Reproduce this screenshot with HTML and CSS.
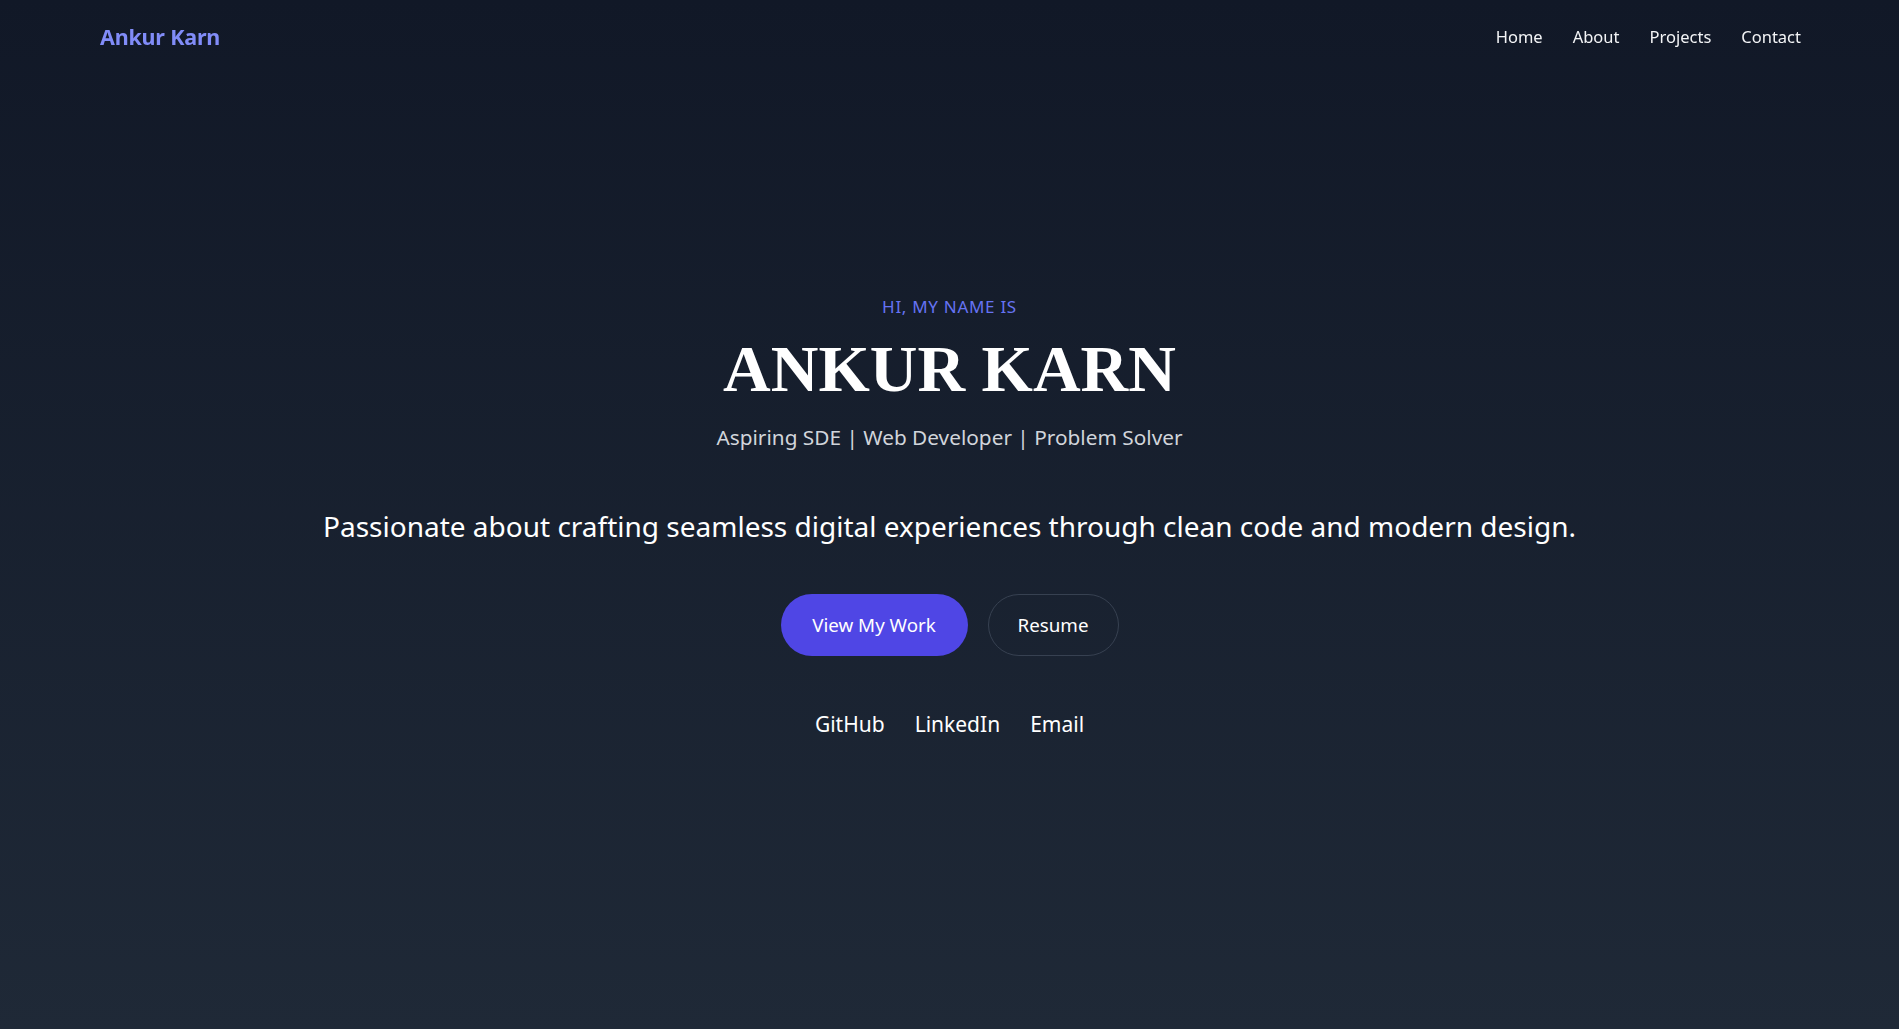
FILE: index.html
```html
<!DOCTYPE html>
<html lang="en">
<head>
<meta charset="utf-8">
<title>Ankur Karn</title>
<link rel="stylesheet" href="styles.css">
</head>
<body>
<header class="site-header">
  <a class="logo" href="#">Ankur Karn</a>
  <nav class="nav">
    <a href="#">Home</a>
    <a href="#">About</a>
    <a href="#">Projects</a>
    <a href="#">Contact</a>
  </nav>
</header>
<main class="hero">
  <p class="intro">HI, MY NAME IS</p>
  <h1 class="name">ANKUR KARN</h1>
  <p class="role">Aspiring SDE | Web Developer | Problem Solver</p>
  <p class="tagline">Passionate about crafting seamless digital experiences through clean code and modern design.</p>
  <div class="actions">
    <a class="btn btn-primary" href="#">View My Work</a>
    <a class="btn btn-outline" href="#">Resume</a>
  </div>
  <div class="socials">
    <a href="#">GitHub</a>
    <a href="#">LinkedIn</a>
    <a href="#">Email</a>
  </div>
</main>
</body>
</html>
```
FILE: styles.css
```css
* { box-sizing: border-box; }
html, body { margin: 0; padding: 0; }
body {
  min-height: 100vh;
  background: linear-gradient(to bottom, #111827, #1f2937);
  color: #ffffff;
  font-family: "Noto Sans", "Open Sans", sans-serif;
}
a { color: inherit; text-decoration: none; }

.site-header {
  position: fixed;
  top: 0; left: 0; right: 0;
  height: 72px;
  padding: 0 98px 0 100px;
  display: flex;
  align-items: center;
  justify-content: space-between;
}
.logo {
  font-weight: 700;
  font-size: 21.5px;
  color: #818cf8;
  letter-spacing: -0.2px;
}
.nav { display: flex; gap: 30px; }
.nav a { font-size: 16.5px; color: #f3f4f6; }

.hero {
  min-height: 100vh;
  padding-top: 5px;
  display: flex;
  flex-direction: column;
  align-items: center;
  justify-content: center;
  text-align: center;
}
.intro {
  margin: 0;
  font-size: 17px;
  line-height: 24px;
  color: #6673f3;
  letter-spacing: 0.7px;
}
.name {
  margin: 12px 0 0;
  font-family: "Liberation Serif", "Times New Roman", serif;
  font-weight: 700;
  font-size: 66px;
  line-height: 76px;
  color: #ffffff;
}
.role {
  margin: 15px 0 0;
  font-size: 20.8px;
  line-height: 30px;
  color: #d1d5db;
}
.tagline {
  margin: 54px 0 0;
  font-size: 28px;
  line-height: 40px;
  color: #ffffff;
}
.actions {
  margin-top: 48px;
  display: flex;
  gap: 20px;
}
.btn {
  height: 62px;
  display: inline-flex;
  align-items: center;
  justify-content: center;
  border-radius: 9999px;
  font-size: 18.8px;
}
.btn-primary {
  width: 187px;
  background: #4f46e5;
  color: #ffffff;
}
.btn-outline {
  width: 131px;
  border: 1px solid #374151;
  color: #ffffff;
}
.socials {
  margin-top: 53px;
  display: flex;
  gap: 30px;
  line-height: 30px;
}
.socials a { font-size: 21px; color: #ffffff; }
```
